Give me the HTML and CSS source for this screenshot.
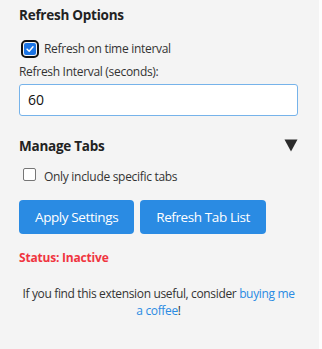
FILE: index.html
```html
<!DOCTYPE html>
<html>
<head>
<meta charset="utf-8">
<link rel="stylesheet" href="styles.css">
</head>
<body>
<div class="page">
  <h2 class="title">Refresh Options</h2>
  <label class="check-row first">
    <span class="box checked"><svg viewBox="0 0 12 12" width="12" height="12"><path d="M2.5 6.2 L5 8.6 L9.6 3.4" fill="none" stroke="#fff" stroke-width="1.8" stroke-linecap="round" stroke-linejoin="round"/></svg></span>
    <span class="check-label">Refresh on time interval</span>
  </label>
  <div class="field-label">Refresh Interval (seconds):</div>
  <div class="input">60</div>
  <div class="section-head">
    <h2 class="title">Manage Tabs</h2>
    <svg class="toggle" viewBox="0 0 14 13" width="14" height="13"><path d="M0.5 0.5 H13.5 L7 12.5 Z" fill="#2b2b2b"/></svg>
  </div>
  <label class="check-row second">
    <span class="box"></span>
    <span class="check-label">Only include specific tabs</span>
  </label>
  <div class="buttons">
    <span class="btn">Apply Settings</span>
    <span class="btn">Refresh Tab List</span>
  </div>
  <div class="status">Status: Inactive</div>
  <p class="footer">If you find this extension useful, consider <a href="#">buying me a coffee</a>!</p>
</div>
</body>
</html>
```
FILE: styles.css
```css
html, body {
  margin: 0;
  padding: 0;
  background: #fdfdfd;
  height: 100%;
}
.page {
  width: 319px;
  min-height: 349px;
  box-sizing: border-box;
  background: #f4f4f4;
  padding: 5px 21px 0 19px;
  font-family: "Open Sans", "Noto Sans", sans-serif;
  color: #222;
}
.title {
  margin: 0;
  font-size: 13.5px;
  line-height: 20px;
  font-weight: 700;
  color: #222;
  letter-spacing: -0.25px;
}
.check-row {
  display: flex;
  align-items: center;
  font-size: 12px;
}
.check-row.first {
  margin-top: 14px;
  height: 19px;
}
.check-row.second {
  margin-top: 11px;
  height: 15px;
}
.box {
  box-sizing: border-box;
  width: 13px;
  height: 13px;
  border: 1px solid #767676;
  border-radius: 2px;
  background: #fff;
  display: flex;
  align-items: center;
  justify-content: center;
  margin-left: 4px;
  margin-right: 8px;
}
.box.checked {
  width: 12px;
  height: 12px;
  background: #1b74e4;
  border: none;
  border-radius: 2px;
  outline: 2px solid #101010;
  outline-offset: 1px;
  margin-left: 5px;
  margin-right: 8px;
}
.box.checked svg {
  width: 10px;
  height: 10px;
}
.second .check-label {
  position: relative;
  top: 2px;
}
.check-label {
  color: #333;
  letter-spacing: -0.3px;
}
.field-label {
  margin-top: 6px;
  font-size: 12px;
  line-height: 16px;
  color: #333;
  letter-spacing: -0.3px;
}
.input {
  margin-top: 4px;
  height: 32px;
  box-sizing: border-box;
  border: 1px solid #76b3ea;
  border-radius: 3px;
  background: #fff;
  padding-left: 8px;
  font-size: 14px;
  line-height: 30px;
  color: #111;
}
.section-head {
  margin-top: 20px;
  display: flex;
  justify-content: space-between;
  align-items: center;
}
.toggle {
  display: block;
  position: relative;
  top: -1px;
}
.buttons {
  margin-top: 18px;
  display: flex;
  gap: 6px;
}
.btn {
  display: inline-flex;
  align-items: center;
  justify-content: center;
  height: 34px;
  padding: 0 16px;
  background: #2a8be3;
  color: #fff;
  border-radius: 4px;
  font-size: 13.5px;
  letter-spacing: -0.4px;
}
.status {
  margin-top: 16px;
  font-size: 12px;
  line-height: 16px;
  font-weight: 700;
  color: #f0353f;
  letter-spacing: -0.2px;
}
.footer {
  margin: 19px 0 0 0;
  text-align: center;
  font-size: 12px;
  line-height: 17px;
  color: #333;
  letter-spacing: -0.35px;
}
.footer a {
  color: #2a8be3;
  text-decoration: none;
}
```
